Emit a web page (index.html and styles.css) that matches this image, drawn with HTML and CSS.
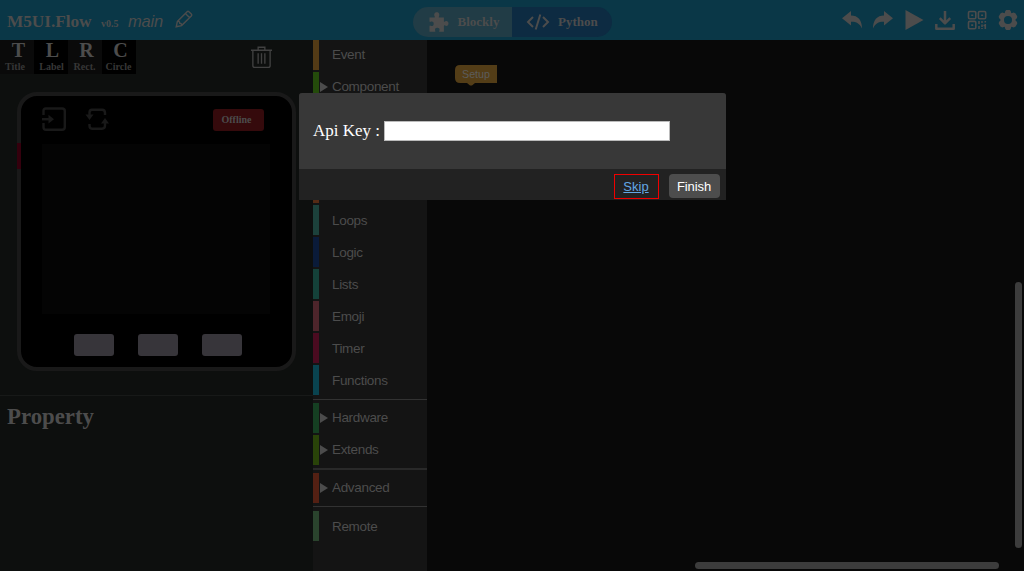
FILE: index.html
```html
<!DOCTYPE html>
<html lang="en">
<head>
<meta charset="utf-8">
<title>M5UI.Flow</title>
<link rel="stylesheet" href="styles.css">
</head>
<body>
<header class="topbar">
  <div class="brand">
    <span class="brand-name">M5UI.Flow</span>
    <span class="version">v0.5</span>
    <span class="project">main</span>
    <svg class="pencil" viewBox="0 0 18 18"><path d="M1.2 16.8 2.4 11.4 12.1 1.7Q13 .8 13.9 1.7L16.3 4.1Q17.2 5 16.3 5.9L6.6 15.6ZM10.4 3.5 14.5 7.6M2.4 11.4Q4.5 10.8 4.7 13.2Q7 13.4 6.6 15.6"/></svg>
  </div>
  <div class="modes">
    <div class="mode mode-blockly">
      <svg class="puzzle" viewBox="0 0 20 20"><path d="M1 5.5H5.5C6.3 5.5 6.5 5 6.2 4.4C5 2.3 6.3.2 8.3.2S11.6 2.3 10.4 4.4C10.1 5 10.3 5.5 11 5.5H15.4V9.2C15.4 9.9 15.9 10 16.5 9.6C18.3 8.4 20 9.6 20 11.5S18.3 14.6 16.5 13.4C15.9 13 15.4 13.2 15.4 13.9V19.8H11.2C10.5 19.8 10.5 19.3 10.8 18.7C11.7 17 10.5 15.8 8.8 15.8S5.8 17 6.7 18.7C7 19.3 6.9 19.8 6.2 19.8H1V14.2C1 13.5 1.5 13.4 2.1 13.7C3.8 14.6 5.2 13.4 5.2 11.7S3.8 9 2.1 9.8C1.5 10.1 1 9.9 1 9.2Z"/></svg>
      <span>Blockly</span>
    </div>
    <div class="mode mode-python">
      <svg class="code" viewBox="0 0 24 18"><path d="M7 4 2 9 7 14M17 4 22 9 17 14M14.3 1.5 9.7 16.5"/></svg>
      <span>Python</span>
    </div>
  </div>
  <div class="actions">
    <svg viewBox="0 0 20 20"><path d="M0 8.2 9 1V5.4C16 5.4 20 10 20 18.5C17.5 13.3 14 11.6 9 11.8V15.4Z"/></svg>
    <svg viewBox="0 0 20 20"><path d="M20 8.2 11 1V5.4C4 5.4 0 10 0 18.5C2.5 13.3 6 11.6 11 11.8V15.4Z"/></svg>
    <svg viewBox="0 0 20 20"><path d="M1.5 0V20L19.5 10Z"/></svg>
    <svg class="line" viewBox="0 0 20 20"><path d="M10 1V13M4.8 8.2 10 13.4 15.2 8.2M1.3 14V18.7H18.7V14"/></svg>
    <svg class="qr" viewBox="0 0 20 20"><rect x="1.5" y="1.5" width="7.3" height="7.3" rx="1.2"/><rect x="11.4" y="1.5" width="7.3" height="7.3" rx="1.2"/><rect x="1.5" y="11.4" width="7.3" height="7.3" rx="1.2"/><path d="M4.2 5.2H6.2M14.1 5.2H16.1M4.2 15.1H6.2M12 11V14M12 16V19M15 11V13M15 14.5V17M15 18V19M18.3 11V12.5M18.3 14V19M16.5 15.5H18"/></svg>
    <svg class="gear" viewBox="0 0 20 20"><path fill-rule="evenodd" d="M7.3 1 8.3 0H11.7L12.7 1 13.3 3.2 15.8 2.5 17.6 3.4 19.3 6.4 19 8 17.2 10 19 12 19.3 13.6 17.6 16.6 15.8 17.5 13.3 16.8 12.7 19 11.7 20H8.3L7.3 19 6.7 16.8 4.2 17.5 2.4 16.6.7 13.6 1 12 2.8 10 1 8 .7 6.4 2.4 3.4 4.2 2.5 6.7 3.2ZM10 6A4 4 0 1 0 10 14A4 4 0 1 0 10 6Z"/></svg>
  </div>
</header>
<main class="main">
  <aside class="designer">
    <div class="stage">
      <div class="widgets">
        <div class="widget"><b>T</b><small>Title</small></div>
        <div class="widget dark"><b>L</b><small>Label</small></div>
        <div class="widget"><b>R</b><small>Rect.</small></div>
        <div class="widget dark"><b>C</b><small>Circle</small></div>
        <svg class="trash" viewBox="0 0 24 24"><path d="M1 5H23M8.5 5V1.8H15.5V5M3 5V21Q3 22.8 5 22.8H19Q21 22.8 21 21V5M8.5 8V19M12 8V19M15.5 8V19"/></svg>
      </div>
      <div class="device">
        <div class="device-head">
          <svg viewBox="0 0 24 24"><path d="M1.5 8V4Q1.5 1.5 4 1.5H20Q22.8 1.5 22.8 4V20Q22.8 22.8 20 22.8H4Q1.5 22.8 1.5 20V16"/><path d="M0 12.2H9"/><path class="solid" d="M6.5 7.8 12 12.2 6.5 16.5Z"/></svg>
          <svg viewBox="0 0 24 24"><path d="M4.5 8V5.5Q4.5 2.8 7 2.8H17Q20 2.8 20 6V8M4.5 17V18.5Q4.5 21.7 7 21.7H17Q20 21.7 20 18.5V15"/><path class="solid" d="M.5 7.5H8.5L4.5 13ZM16 16.5H24L20 11Z"/></svg>
          <span class="status">Offline</span>
        </div>
        <div class="screen"></div>
        <div class="buttons"><i></i><i></i><i></i></div>
        <div class="power"></div>
      </div>
    </div>
    <section class="property"><h2>Property</h2></section>
  </aside>
  <nav class="toolbox">
    <div class="cat event">Event</div>
    <div class="cat component parent">Component</div>
    <div class="cat math"></div>
    <div class="cat loops">Loops</div>
    <div class="cat logic">Logic</div>
    <div class="cat lists">Lists</div>
    <div class="cat emoji">Emoji</div>
    <div class="cat timer">Timer</div>
    <div class="cat functions">Functions</div>
    <hr>
    <div class="cat hardware parent">Hardware</div>
    <div class="cat extends parent">Extends</div>
    <hr class="wide">
    <div class="cat advanced parent">Advanced</div>
    <hr class="last">
    <div class="cat remote">Remote</div>
  </nav>
  <div class="workspace">
    <div class="block">
      <svg viewBox="0 0 42 21"><path d="M5 0H42V18H20L17 20.5H15L12 18H5Q0 18 0 13V5Q0 0 5 0Z"/></svg>
      <span>Setup</span>
    </div>
    <div class="scroll-y"></div>
    <div class="scroll-x"></div>
  </div>
</main>
<div class="dialog">
  <div class="dialog-body">
    <label for="key">Api Key :</label>
    <input id="key" type="text">
  </div>
  <div class="dialog-foot">
    <a class="skip">Skip</a>
    <button class="finish">Finish</button>
  </div>
</div>
</body>
</html>
```

FILE: styles.css
```css
* { box-sizing: border-box; }
body {
  margin: 0;
  width: 1024px;
  height: 571px;
  overflow: hidden;
  background: #080808;
  color: #4c4c4c;
  font-family: "Liberation Serif", "Times New Roman", serif;
}
svg { display: block; fill: none; flex: none; }

.topbar {
  height: 40px;
  background: #0a3747;
  display: grid;
  grid-template-columns: 412.5px 199px 1fr;
  align-items: center;
}
.brand { display: flex; align-items: baseline; padding: 3px 0 0 7px; white-space: nowrap; }
.brand-name { font-size: 17.3px; font-weight: bold; width: 94px; letter-spacing: -.05px; }
.version { font-size: 10px; font-weight: bold; width: 27px; }
.project { font: italic 16.5px "Liberation Sans", Arial, sans-serif; letter-spacing: -.2px; width: 46px; }
.pencil { width: 18px; height: 18px; stroke: #4c4c4c; stroke-width: 1.4; align-self: flex-start; margin: -2px 0 0 1px; }
.modes { display: flex; height: 30px; margin-top: 4px; border-radius: 15px; overflow: hidden; font-size: 13px; font-weight: bold; }
.mode { display: flex; align-items: center; }
.mode-blockly { width: 99.5px; background: #213c46; padding-left: 15px; gap: 9px; }
.mode-python { width: 99.5px; background: #0d2b42; padding-left: 14px; gap: 8px; }
.puzzle { width: 21px; height: 20px; fill: #4c4c4c; }
.code { width: 24px; height: 18px; stroke: #4c4c4c; stroke-width: 2; }
.actions { display: flex; justify-content: flex-end; gap: 11.3px; padding-right: 6px; }
.actions svg { width: 20px; height: 20px; fill: #4c4c4c; }
.actions .line { fill: none; stroke: #4c4c4c; stroke-width: 2.5; stroke-linejoin: round; }
.actions .qr { fill: none; stroke: #4c4c4c; stroke-width: 1.6; }

.main { display: grid; grid-template-columns: 313px 114px 1fr; height: 531px; }
.designer { background: #0d0f0e; }
.stage { height: 356px; border-bottom: 1px solid #171918; }
.widgets { display: flex; height: 34px; }
.widget { width: 34px; height: 34px; padding-left: 2px; background: #0a0a0a; display: flex; flex-direction: column; align-items: center; }
.widget.dark { background: #000; }
.widget:nth-child(1) small { margin-left: -6px; }
.widget:nth-child(2) small { margin-left: -1px; }
.widget:nth-child(3) small, .widget:nth-child(4) small { margin-left: -3px; }
.widget b { font-size: 20px; line-height: 21px; padding-left: 1px; }
.widget small { font-size: 10px; line-height: 11px; font-weight: bold; color: #373737; }
.trash { width: 23px; height: 24px; margin: 5px 0 0 114px; stroke: #414141; stroke-width: 1.4; }
.device {
  position: relative;
  width: 279px;
  height: 279px;
  margin: 18px 0 0 17px;
  border: 4px solid #191919;
  border-radius: 20px;
  background: #000;
  padding: 11px 21px 0;
}
.device-head { display: flex; height: 37px; gap: 19px; }
.device-head svg { width: 24px; height: 24px; stroke: #191919; stroke-width: 2.4; }
.device-head .solid { fill: #191919; stroke: none; }
.status {
  width: 51px; height: 22px; line-height: 22px; margin: 2px 7px 0 auto; padding-left: 8.5px;
  background: #350a0c; border-radius: 3px; font-size: 10px; font-weight: bold;
}
.screen { width: 228px; height: 170px; background: #040404; }
.buttons { display: flex; gap: 24px; padding: 20px 0 0 32px; }
.buttons i { width: 40px; height: 22px; border-radius: 3px; background: #37353a; }
.power { position: absolute; left: -4px; top: 47px; width: 4px; height: 26px; background: #34000d; }
.property h2 { margin: 0; padding: 7px 7px; font-size: 22.8px; line-height: 27px; }

.toolbox { background: #141414; font: 13.5px "Liberation Sans", Arial, sans-serif; letter-spacing: -.32px; }
.cat { height: 30px; margin-bottom: 2px; border-left: 6px solid; padding-left: 13px; line-height: 31px; color: #4c4c4c; }
.event { line-height: 30px; }
.parent { display: flex; align-items: center; padding-left: 1px; line-height: 30px; }
.parent::before { content: ""; border: 5px solid transparent; border-left: 8px solid #4c4c4c; border-right: 0; margin-right: 4px; }
.component { line-height: 28px; }
.event { border-color: #533b16; }
.component { border-color: #244b0b; }
.math { border-color: #552b15; margin-top: 71px; }
.loops { border-color: #1c413b; }
.logic { border-color: #0a1b39; }
.lists { border-color: #144139; }
.emoji { border-color: #4d252b; }
.timer { border-color: #4a0b20; }
.functions { border-color: #09434f; }
.hardware { border-color: #153f22; }
.extends { border-color: #294309; }
.advanced { border-color: #532013; }
.remote { border-color: #2a432d; }
.toolbox hr { height: 1px; margin: 4px 0 3px; border: 0; background: #323232; }
.toolbox hr.wide { height: 2px; margin: 3px 0 3px; background: #292929; }
.toolbox hr.last { margin: 3px 0 4px; }

.workspace { position: relative; background: #080808; }
.block { position: absolute; left: 28px; top: 25px; width: 42px; height: 21px; font: 10.7px/18px "Liberation Sans", Arial, sans-serif; text-align: center; }
.block svg { position: absolute; inset: 0; width: 42px; height: 21px; fill: #533d17; }
.block span { position: relative; color: #5c5c5c; }
.scroll-y { position: absolute; right: 2px; top: 242px; width: 7px; height: 266px; border-radius: 4px; background: #3c3c3c; }
.scroll-x { position: absolute; left: 268px; top: 522px; width: 304px; height: 7px; border-radius: 4px; background: #3c3c3c; }

.dialog { position: absolute; left: 298.5px; top: 92.5px; width: 427px; height: 107.5px; border-radius: 3px 3px 0 0; overflow: hidden; background: #222; }
.dialog-body { display: flex; align-items: center; height: 76.5px; padding-left: 14.5px; background: #383838; color: #fff; }
.dialog-body label { width: 71px; font-size: 17px; white-space: nowrap; }
.dialog-body input { width: 285.5px; height: 20px; padding: 0 4px; border: 1px solid #bbb; background: #fff; }
.dialog-foot { display: flex; justify-content: flex-end; align-items: center; height: 31px; padding: 3px 6px 0 0; gap: 10px; font: 13px "Liberation Sans", Arial, sans-serif; }
.skip { width: 45px; height: 25px; border: 1px solid #f00000; color: #63a7e4; line-height: 23px; text-align: center; text-decoration: underline; }
.finish { width: 51px; height: 24px; padding: 0; border: 0; border-radius: 4px; background: #4d4d4d; color: #fff; font: inherit; letter-spacing: -.1px; }
```
